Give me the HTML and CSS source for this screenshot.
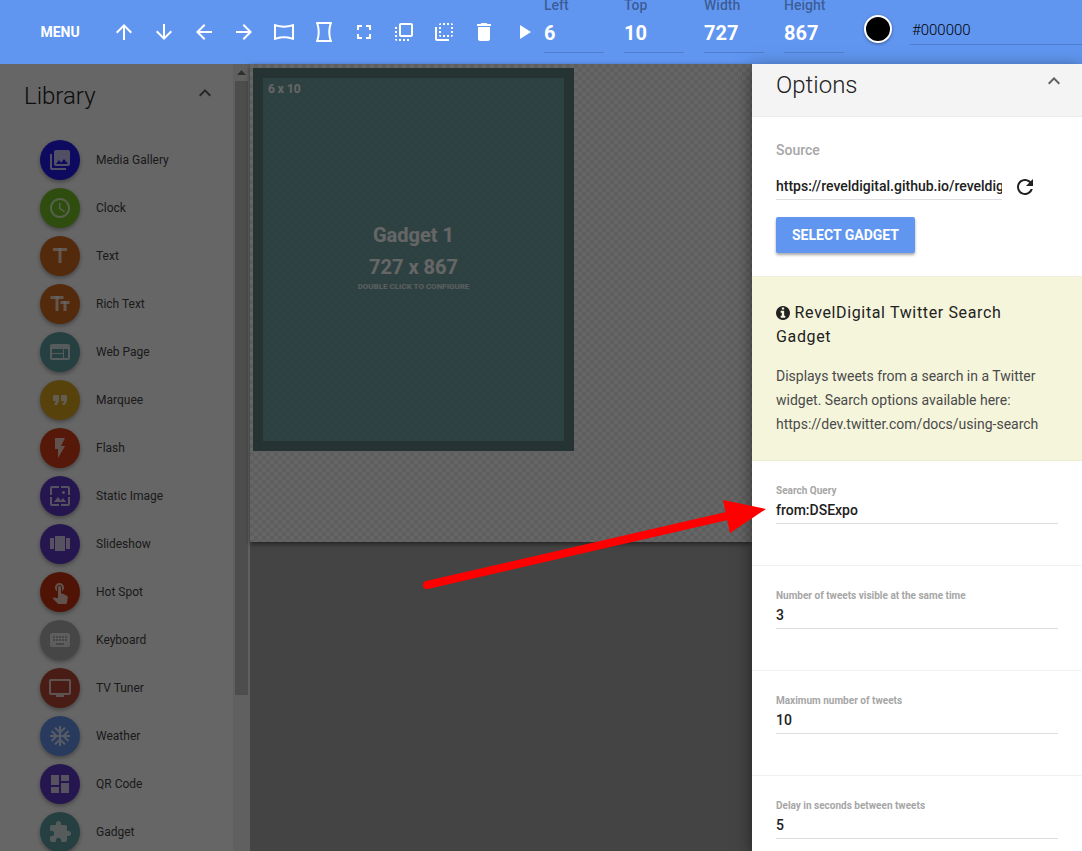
FILE: index.html
```html
<!DOCTYPE html>
<html lang="en">

<head>
    <meta charset="UTF-8" />
    <meta name="viewport" content="width=device-width, initial-scale=1.0" />
    <title>Template Designer</title>
    <link rel="stylesheet" href="styles.css">
</head>

<body>
    <header class="toolbar">
        <button type="button" class="menu-btn">MENU</button>
        <button type="button" class="tool" aria-label="Move up"><svg viewBox="0 0 24 24"><path d="M4 12l1.41 1.41L11 7.83V20h2V7.83l5.58 5.59L20 12l-8-8-8 8z"/></svg></button>
        <button type="button" class="tool" aria-label="Move down"><svg viewBox="0 0 24 24"><path d="M20 12l-1.41-1.41L13 16.17V4h-2v12.17l-5.58-5.59L4 12l8 8 8-8z"/></svg></button>
        <button type="button" class="tool" aria-label="Move left"><svg viewBox="0 0 24 24"><path d="M20 11H7.83l5.59-5.59L12 4l-8 8 8 8 1.41-1.41L7.83 13H20v-2z"/></svg></button>
        <button type="button" class="tool" aria-label="Move right"><svg viewBox="0 0 24 24"><path d="M12 4l-1.41 1.41L16.17 11H4v2h12.17l-5.58 5.59L12 20l8-8z"/></svg></button>
        <button type="button" class="tool" aria-label="Fill width"><svg viewBox="0 0 24 24"><path d="M20 6.54v10.91c-2.6-.77-5.28-1.16-8-1.16-2.72 0-5.4.39-8 1.16V6.54c2.6.77 5.28 1.16 8 1.16 2.72.01 5.4-.38 8-1.16M21.43 4c-.1 0-.2.02-.31.06C18.18 5.16 15.09 5.7 12 5.7c-3.09 0-6.18-.55-9.12-1.64-.11-.04-.22-.06-.31-.06-.34 0-.57.23-.57.63v14.75c0 .39.23.62.57.62.1 0 .2-.02.31-.06 2.94-1.1 6.03-1.64 9.12-1.64 3.09 0 6.18.55 9.12 1.64.11.04.21.06.31.06.33 0 .57-.23.57-.63V4.63c0-.4-.24-.63-.57-.63z"/></svg></button>
        <button type="button" class="tool" aria-label="Fill height"><svg viewBox="0 0 24 24"><path d="M19.94 21.12c-1.1-2.94-1.64-6.03-1.64-9.12 0-3.09.55-6.18 1.64-9.12.04-.11.06-.22.06-.31 0-.34-.23-.57-.63-.57H4.63c-.4 0-.63.23-.63.57 0 .1.02.2.06.31C5.16 5.82 5.71 8.91 5.71 12c0 3.09-.55 6.18-1.64 9.12-.05.11-.07.22-.07.31 0 .33.23.57.63.57h14.75c.39 0 .63-.24.63-.57-.01-.1-.03-.2-.07-.31zM6.54 20c.77-2.6 1.16-5.28 1.16-8 0-2.72-.39-5.4-1.16-8h10.91c-.77 2.6-1.16 5.28-1.16 8 0 2.72.39 5.4 1.16 8H6.54z"/></svg></button>
        <button type="button" class="tool" aria-label="Full screen"><svg viewBox="0 0 24 24"><path d="M7 14H5v5h5v-2H7v-3zm-2-4h2V7h3V5H5v5zm12 7h-3v2h5v-5h-2v3zM14 5v2h3v3h2V5h-5z"/></svg></button>
        <button type="button" class="tool" aria-label="Bring to front"><svg viewBox="0 0 24 24"><path d="M3 13h2v-2H3v2zm0 4h2v-2H3v2zm2 4v-2H3c0 1.1.89 2 2 2zM3 9h2V7H3v2zm12 12h2v-2h-2v2zm4-18H9c-1.11 0-2 .9-2 2v10c0 1.1.89 2 2 2h10c1.1 0 2-.9 2-2V5c0-1.1-.9-2-2-2zm0 12H9V5h10v10zm-8 6h2v-2h-2v2zm-4 0h2v-2H7v2z"/></svg></button>
        <button type="button" class="tool" aria-label="Send to back"><svg viewBox="0 0 24 24"><path d="M9 7H7v2h2V7zm0 4H7v2h2v-2zm0-8c-1.11 0-2 .9-2 2h2V3zm4 12h-2v2h2v-2zm6-12v2h2c0-1.1-.9-2-2-2zm-6 0h-2v2h2V3zM9 17v-2H7c0 1.1.89 2 2 2zm10-4h2v-2h-2v2zm0-4h2V7h-2v2zm0 8c1.1 0 2-.9 2-2h-2v2zM5 7H3v12c0 1.1.89 2 2 2h12v-2H5V7zm10-2h2V3h-2v2zm0 12h2v-2h-2v2z"/></svg></button>
        <button type="button" class="tool" aria-label="Delete"><svg viewBox="0 0 24 24"><path d="M6 19c0 1.1.9 2 2 2h8c1.1 0 2-.9 2-2V7H6v12zM19 4h-3.5l-1-1h-5l-1 1H5v2h14V4z"/></svg></button>
        <button type="button" class="tool" aria-label="Preview"><svg viewBox="0 0 24 24"><path d="M8 5v14l11-7z"/></svg></button>

        <div class="dimensions">
            <div class="dimension">
                <label for="left">Left</label>
                <input type="text" id="left" value="6">
            </div>
            <div class="dimension">
                <label for="top">Top</label>
                <input type="text" id="top" value="10">
            </div>
            <div class="dimension">
                <label for="width">Width</label>
                <input type="text" id="width" value="727">
            </div>
            <div class="dimension">
                <label for="height">Height</label>
                <input type="text" id="height" value="867">
            </div>
        </div>

        <div class="color">
            <button type="button" class="swatch" aria-label="Pick color"></button>
            <input type="text" class="color-value" aria-label="Background color" value="#000000">
        </div>
    </header>

    <main class="designer">
        <aside class="library">
            <div class="library-content">
                <div class="library-header">
                    <h2>Library</h2>
                    <button type="button" class="collapse" aria-label="Collapse library"><svg viewBox="0 0 24 24"><path d="M12 8l-6 6 1.41 1.41L12 10.83l4.59 4.58L18 14z"/></svg></button>
                </div>
                <ul class="library-list">
                    <li><button type="button"><span class="fab blue"><svg viewBox="0 0 24 24"><path d="M22 16V4c0-1.1-.9-2-2-2H8c-1.1 0-2 .9-2 2v12c0 1.1.9 2 2 2h12c1.1 0 2-.9 2-2zm-11-4l2.03 2.71L16 11l4 5H8l3-4zM2 6v14c0 1.1.9 2 2 2h14v-2H4V6H2z"/></svg></span>Media Gallery</button></li>
                    <li><button type="button"><span class="fab green"><svg viewBox="0 0 24 24"><path d="M11.99 2C6.47 2 2 6.48 2 12s4.47 10 9.99 10C17.52 22 22 17.52 22 12S17.52 2 11.99 2zM12 20c-4.42 0-8-3.58-8-8s3.58-8 8-8 8 3.58 8 8-3.58 8-8 8zm.5-13H11v6l5.25 3.15.75-1.23-4.5-2.67z"/></svg></span>Clock</button></li>
                    <li><button type="button"><span class="fab orange"><svg viewBox="0 0 24 24"><rect x="5" y="4" width="14" height="3"/><rect x="10.5" y="4" width="3" height="15"/></svg></span>Text</button></li>
                    <li><button type="button"><span class="fab orange"><svg viewBox="0 0 24 24"><rect x="2.5" y="4" width="13" height="3"/><rect x="7.5" y="4" width="3" height="15"/><rect x="12.5" y="9" width="9" height="3"/><rect x="15.5" y="9" width="3" height="10"/></svg></span>Rich Text</button></li>
                    <li><button type="button"><span class="fab teal"><svg viewBox="0 0 24 24"><path d="M20 4H4c-1.1 0-1.99.9-1.99 2L2 18c0 1.1.9 2 2 2h16c1.1 0 2-.9 2-2V6c0-1.1-.9-2-2-2zm-5 14H4v-4h11v4zm0-5H4V9h11v4zm5 5h-4V9h4v9z"/></svg></span>Web Page</button></li>
                    <li><button type="button"><span class="fab yellow"><svg viewBox="0 0 24 24"><path d="M6 17h3l2-4V7H5v6h3zm8 0h3l2-4V7h-6v6h3z"/></svg></span>Marquee</button></li>
                    <li><button type="button"><span class="fab red"><svg viewBox="0 0 24 24"><path d="M7 2v11h3v9l7-12h-4l4-8z"/></svg></span>Flash</button></li>
                    <li><button type="button"><span class="fab purple"><svg viewBox="0 0 24 24"><path d="M4 4h7V2H4c-1.1 0-2 .9-2 2v7h2V4zm6 9l-4 5h12l-3-4-2.03 2.71L10 13zm7-4.5c0-.83-.67-1.5-1.5-1.5S14 7.67 14 8.5s.67 1.5 1.5 1.5S17 9.33 17 8.5zM20 2h-7v2h7v7h2V4c0-1.1-.9-2-2-2zm0 18h-7v2h7c1.1 0 2-.9 2-2v-7h-2v7zM4 13H2v7c0 1.1.9 2 2 2h7v-2H4v-7z"/></svg></span>Static Image</button></li>
                    <li><button type="button"><span class="fab purple"><svg viewBox="0 0 24 24"><path d="M7 19h10V4H7v15zm-5-2h4V6H2v11zM18 6v11h4V6h-4z"/></svg></span>Slideshow</button></li>
                    <li><button type="button"><span class="fab dark-red"><svg viewBox="0 0 24 24"><path d="M9 11.24V7.5C9 6.12 10.12 5 11.5 5S14 6.12 14 7.5v3.74c1.21-.81 2-2.18 2-3.74C16 5.01 13.99 3 11.5 3S7 5.01 7 7.5c0 1.56.79 2.93 2 3.74zm9.84 4.63l-4.54-2.26c-.17-.07-.35-.11-.54-.11H13v-6c0-.83-.67-1.5-1.5-1.5S10 6.67 10 7.5v10.74l-3.43-.72c-.08-.01-.15-.03-.24-.03-.31 0-.59.13-.79.33l-.79.8 4.94 4.94c.27.27.65.44 1.06.44h6.79c.75 0 1.33-.55 1.44-1.28l.75-5.27c.01-.07.02-.14.02-.2 0-.62-.38-1.16-.91-1.38z"/></svg></span>Hot Spot</button></li>
                    <li><button type="button"><span class="fab gray"><svg viewBox="0 0 24 24"><path d="M20 5H4c-1.1 0-1.99.9-1.99 2L2 17c0 1.1.9 2 2 2h16c1.1 0 2-.9 2-2V7c0-1.1-.9-2-2-2zm-9 3h2v2h-2V8zm0 3h2v2h-2v-2zM8 8h2v2H8V8zm0 3h2v2H8v-2zm-1 2H5v-2h2v2zm0-3H5V8h2v2zm9 7H8v-2h8v2zm0-4h-2v-2h2v2zm0-3h-2V8h2v2zm3 3h-2v-2h2v2zm0-3h-2V8h2v2z"/></svg></span>Keyboard</button></li>
                    <li><button type="button"><span class="fab brown"><svg viewBox="0 0 24 24"><path d="M21 3H3c-1.1 0-2 .9-2 2v12c0 1.1.9 2 2 2h5v2h8v-2h5c1.1 0 1.99-.9 1.99-2L23 5c0-1.1-.9-2-2-2zm0 14H3V5h18v12z"/></svg></span>TV Tuner</button></li>
                    <li><button type="button"><span class="fab light-blue"><svg viewBox="0 0 24 24"><path d="M22 11h-4.17l3.24-3.24-1.41-1.42L15 11h-2V9l4.66-4.66-1.42-1.41L13 6.17V2h-2v4.17L7.76 2.93 6.34 4.34 11 9v2H9L4.34 6.34 2.93 7.76 6.17 11H2v2h4.17l-3.24 3.24 1.41 1.42L9 13h2v2l-4.66 4.66 1.42 1.41L11 17.83V22h2v-4.17l3.24 3.24 1.42-1.41L13 15v-2h2l4.66 4.66 1.41-1.42L17.83 13H22z"/></svg></span>Weather</button></li>
                    <li><button type="button"><span class="fab purple"><svg viewBox="0 0 24 24"><path d="M3 13h8V3H3v10zm0 8h8v-6H3v6zm10 0h8V11h-8v10zm0-18v6h8V3h-8z"/></svg></span>QR Code</button></li>
                    <li><button type="button"><span class="fab teal"><svg viewBox="0 0 24 24"><path d="M20.5 11H19V7c0-1.1-.9-2-2-2h-4V3.5C13 2.12 11.88 1 10.5 1S8 2.12 8 3.5V5H4c-1.1 0-1.99.9-1.99 2v3.8H3.5c1.49 0 2.7 1.21 2.7 2.7s-1.21 2.7-2.7 2.7H2V20c0 1.1.9 2 2 2h3.8v-1.5c0-1.49 1.21-2.7 2.7-2.7 1.49 0 2.7 1.21 2.7 2.7V22H17c1.1 0 2-.9 2-2v-4h1.5c1.38 0 2.5-1.12 2.5-2.5S21.88 11 20.5 11z"/></svg></span>Gadget</button></li>
                </ul>
            </div>
            <div class="scrollbar">
                <svg viewBox="0 0 17 17"><path d="M4 11h9L8.500 6z"/></svg>
                <div class="scrollbar-thumb"></div>
            </div>
        </aside>

        <section class="workspace">
            <div class="canvas">
                <div class="gadget">
                    <span class="gadget-position">6 x 10</span>
                    <div class="gadget-info">
                        <span class="gadget-name">Gadget 1</span>
                        <span class="gadget-name">727 x 867</span>
                        <span class="gadget-hint">DOUBLE CLICK TO CONFIGURE</span>
                    </div>
                </div>
            </div>
        </section>

        <div class="backdrop"></div>

        <aside class="options">
            <div class="options-header">
                <h2>Options</h2>
                <button type="button" class="collapse" aria-label="Collapse options"><svg viewBox="0 0 24 24"><path d="M12 8l-6 6 1.41 1.41L12 10.83l4.59 4.58L18 14z"/></svg></button>
            </div>

            <div class="source">
                <label for="source">Source</label>
                <div class="source-row">
                    <input type="text" id="source" value="https://reveldigital.github.io/reveldigital-gadgets/twitter-search.xml">
                    <button type="button" class="refresh" aria-label="Refresh"><svg viewBox="0 0 24 24"><path d="M17.65 6.35C16.2 4.9 14.21 4 12 4c-4.42 0-7.99 3.58-7.99 8s3.57 8 7.99 8c3.73 0 6.84-2.55 7.73-6h-2.08c-.82 2.33-3.04 4-5.65 4-3.31 0-6-2.69-6-6s2.69-6 6-6c1.66 0 3.14.69 4.22 1.78L13 11h7V4l-2.35 2.35z"/></svg></button>
                </div>
                <button type="button" class="select-gadget">SELECT GADGET</button>
            </div>

            <div class="about">
                <h3><svg viewBox="0 0 1536 1536"><path d="M1024 1248v-160q0-14-9-23t-23-9h-96V544q0-14-9-23t-23-9H544q-14 0-23 9t-9 23v160q0 14 9 23t23 9h96v320h-96q-14 0-23 9t-9 23v160q0 14 9 23t23 9h448q14 0 23-9t9-23zM896 352V192q0-14-9-23t-23-9H672q-14 0-23 9t-9 23v160q0 14 9 23t23 9h192q14 0 23-9t9-23zm640 416q0 209-103 385.500T1153.500 1433 768 1536t-385.500-103T103 1153.500 0 768t103-385.500T382.500 103 768 0t385.500 103T1433 382.500 1536 768z"/></svg> RevelDigital Twitter Search Gadget</h3>
                <p>Displays tweets from a search in a Twitter widget. Search options available here: https://dev.twitter.com/docs/using-search</p>
            </div>

            <div class="option">
                <label for="query">Search Query</label>
                <input type="text" id="query" value="from:DSExpo">
            </div>
            <div class="option">
                <label for="visible">Number of tweets visible at the same time</label>
                <input type="text" id="visible" value="3">
            </div>
            <div class="option">
                <label for="maximum">Maximum number of tweets</label>
                <input type="text" id="maximum" value="10">
            </div>
            <div class="option">
                <label for="delay">Delay in seconds between tweets</label>
                <input type="text" id="delay" value="5">
            </div>
        </aside>

        <!-- points at the search query field -->
        <svg class="pointer" viewBox="0 0 344 92">
            <path class="pointer-line" d="M5 86L305 17"/>
            <path class="pointer-head" d="M301 1l43 9-36 24z"/>
        </svg>
    </main>
</body>

</html>
```
FILE: styles.css
```css
:root {
    --primary: #6096f0;
    --text: #212121;
    --label: #a6a6a6;
    --line: #dedede;
}

* {
    box-sizing: border-box;
}

body {
    display: flex;
    flex-direction: column;
    height: 100vh;
    margin: 0;
    overflow: hidden;
    font-family: Roboto, "Liberation Sans", sans-serif;
    color: var(--text);
}

h2,
h3,
p,
ul {
    margin: 0;
    padding: 0;
}

h2 {
    font-size: 24px;
    font-weight: 300;
    line-height: 32px;
}

button,
input {
    padding: 0;
    border: none;
    background: none;
    font-family: inherit;
    color: inherit;
}

button {
    cursor: pointer;
}

input {
    min-width: 0;
    border-radius: 0;
    outline: none;
}

svg {
    display: block;
    fill: currentColor;
}

/* toolbar */
.toolbar {
    display: flex;
    flex-shrink: 0;
    align-items: center;
    height: 64px;
    padding-left: 32px;
    overflow: hidden;
    background: var(--primary);
    color: white;
}

.menu-btn {
    flex-shrink: 0;
    width: 56px;
    margin-right: 16px;
    font-size: 14px;
    font-weight: 700;
}

.tool {
    display: flex;
    flex-shrink: 0;
    justify-content: center;
    width: 40px;
}

.tool svg,
.fab svg,
.refresh svg {
    width: 24px;
    height: 24px;
}

.dimensions {
    display: flex;
    flex-shrink: 0;
    align-self: flex-end;
    gap: 20px;
    padding-bottom: 11px;
}

.dimension {
    display: flex;
    flex-direction: column;
    width: 60px;
}

.dimension label {
    font-size: 14px;
    font-weight: 500;
    line-height: 16px;
    color: rgba(0, 0, 0, 0.4);
}

.dimension input {
    height: 40px;
    border-bottom: 1px solid rgba(0, 0, 0, 0.15);
    font-size: 20px;
    font-weight: 700;
}

.color {
    display: flex;
    flex: 1;
    align-self: flex-start;
    gap: 18px;
    min-width: 0;
    padding: 15px 0 0 20px;
}

.swatch {
    flex-shrink: 0;
    width: 28px;
    height: 28px;
    border: 2px solid white;
    border-radius: 50%;
    background: black;
    box-shadow: 0 1px 3px rgba(0, 0, 0, 0.4);
}

.color-value {
    flex: 1;
    height: 30px;
    padding-left: 2px;
    border-bottom: 1px solid rgba(0, 0, 0, 0.15);
    font-size: 15px;
    font-weight: 300;
    color: black;
}

/* page body */
.designer {
    position: relative;
    display: grid;
    flex: 1;
    grid-template-columns: 250px 1fr 330px;
    min-height: 0;
}

.backdrop {
    position: absolute;
    inset: 0;
    background: rgba(0, 0, 0, 0.6);
}

/* library */
.library {
    display: flex;
    min-height: 0;
    background: white;
}

.library-content {
    flex: 1;
    overflow: hidden;
}

.library-header {
    display: flex;
    align-items: center;
    justify-content: space-between;
    padding: 16px 16px 24px 24px;
}

.collapse svg {
    width: 24px;
    height: 24px;
    opacity: 0.7;
}

.library-header .collapse {
    margin-bottom: 6px;
}

.library-list {
    list-style: none;
}

.library-list button {
    display: flex;
    align-items: center;
    gap: 16px;
    width: 100%;
    height: 48px;
    padding-left: 40px;
    font-size: 12px;
    color: #444444;
}

.fab {
    display: flex;
    align-items: center;
    justify-content: center;
    width: 40px;
    height: 40px;
    border-radius: 50%;
    color: rgba(255, 255, 255, 0.75);
    box-shadow: 0 2px 4px rgba(0, 0, 0, 0.35);
}

.blue {
    background: #2319f0;
}

.green {
    background: #73c023;
}

.orange {
    background: #d2691e;
}

.teal {
    background: #5f9ea0;
}

.yellow {
    background: #daa520;
}

.red {
    background: #d63c14;
}

.purple {
    background: #5f39c8;
}

.dark-red {
    background: #c93410;
}

.gray {
    background: #b0b0b0;
}

.brown {
    background: #b94637;
}

.light-blue {
    background: #6495ed;
}

.scrollbar {
    width: 17px;
    background: #f1f1f1;
    color: #777777;
}

.scrollbar svg {
    width: 17px;
    height: 17px;
}

.scrollbar-thumb {
    height: 78%;
    margin: 0 2px;
    background: #c1c1c1;
}

/* workspace */
.workspace {
    min-width: 0;
    background: #aaaaaa;
}

.canvas {
    height: 478px;
    padding: 4px 3px;
    background: repeating-conic-gradient(#ebebeb 0% 25%, #ffffff 0% 50%) 0 0 / 8px 8px;
    box-shadow: 0 2px 5px rgba(0, 0, 0, 0.5);
}

.gadget {
    display: flex;
    flex-direction: column;
    width: 321px;
    height: 383px;
    padding: 4px 5px;
    border: 10px solid #5d7f80;
    background: rgba(95, 150, 152, 0.85);
    color: white;
    text-align: center;
}

.gadget-position {
    align-self: flex-start;
    font-size: 12px;
    font-weight: 700;
}

.gadget-info {
    display: flex;
    flex: 1;
    flex-direction: column;
    justify-content: center;
    padding-bottom: 24px;
}

.gadget-name {
    font-size: 20px;
    font-weight: 700;
    line-height: 32px;
}

.gadget-hint {
    font-size: 8px;
    font-weight: 700;
    line-height: 8px;
    opacity: 0.8;
}

/* options */
.options {
    z-index: 1;
    min-height: 0;
    overflow: hidden;
    background: white;
    box-shadow: 0 4px 16px rgba(0, 0, 0, 0.5);
}

.options-header {
    display: flex;
    align-items: flex-start;
    justify-content: space-between;
    height: 53px;
    padding: 5px 16px 0 24px;
    border-bottom: 1px solid #ececec;
    background: #f4f4f4;
}

.source {
    padding: 23px 24px;
    border-bottom: 1px solid #f0f0e0;
}

.source label {
    display: block;
    font-size: 14px;
    font-weight: 500;
    line-height: 20px;
    color: var(--label);
}

.source-row {
    display: flex;
    align-items: center;
    gap: 11px;
    margin: 13px 0 17px;
    padding-right: 21px;
}

.source-row input {
    flex: 1;
    height: 27px;
    border-bottom: 1px solid var(--line);
    font-size: 14px;
    font-weight: 500;
}

.select-gadget {
    height: 36px;
    padding: 0 16px;
    border-radius: 2px;
    background: var(--primary);
    color: white;
    font-size: 14px;
    font-weight: 700;
    box-shadow: 0 2px 3px rgba(0, 0, 0, 0.35);
}

.about {
    padding: 24px 40px 24px 24px;
    border-bottom: 1px solid #ececd0;
    background: #f5f5dc;
    line-height: 24px;
}

.about h3 {
    margin-bottom: 15px;
    font-size: 16px;
    font-weight: 400;
    letter-spacing: 0.04em;
}

.about h3 svg {
    display: inline-block;
    width: 14px;
    height: 14px;
    vertical-align: -2px;
}

.about p {
    font-size: 14px;
    font-weight: 400;
    color: #4a4a4a;
}

.option {
    display: flex;
    flex-direction: column;
    padding: 24px 24px 41px;
    border-bottom: 1px solid #f2f2f2;
}

.option label {
    font-size: 10px;
    font-weight: 700;
    line-height: 12px;
    color: var(--label);
}

.option input {
    height: 27px;
    border-bottom: 1px solid var(--line);
    font-size: 14px;
    font-weight: 500;
}

/* red pointer drawn over the page */
.pointer {
    position: absolute;
    z-index: 2;
    top: 435px;
    right: 316px;
    width: 344px;
    height: 92px;
    color: #ff0000;
}

.pointer-line {
    fill: none;
    stroke: currentColor;
    stroke-width: 8;
    stroke-linecap: round;
}
```
